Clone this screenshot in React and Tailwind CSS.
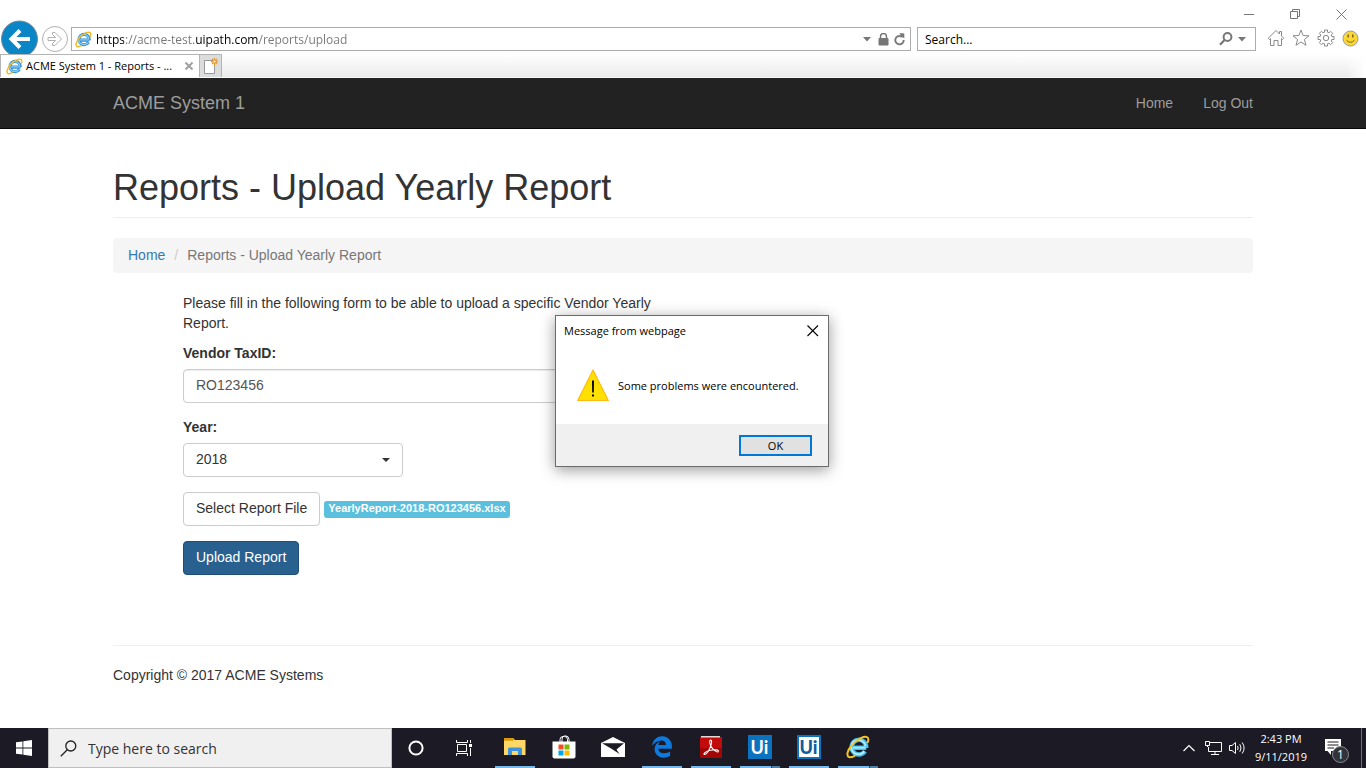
import { useState } from "react";
import { FaEdgeLegacy } from "react-icons/fa6";

const UI_FONT = "font-['Open_Sans','Noto_Sans',sans-serif]";

function InternetExplorerIcon({ className, body = "#3ba9e8", core = "#7fd0f7", ring = "#f2b91d" }) {
  return (
    <svg viewBox="0 0 24 24" className={className} aria-hidden="true" fill="none">
      <path d="M20.3 12.8H6.6M19 16.2A7.3 7.3 0 1 1 20.2 12.8" stroke={body} strokeWidth="4.4" />
      <path d="M19.4 12.6H7M18.2 16.4A7.2 7.2 0 1 1 19.6 11.4" stroke={core} strokeWidth="1.8" />
      <path
        d="M21.8 7.2C23.6 2.2 20.6 0.4 15.2 2.8C8.6 6 2.6 12.6 1.5 18C0.8 22.2 4 23.4 8.6 20.8"
        stroke={ring}
        strokeWidth="2"
        strokeLinecap="round"
      />
    </svg>
  );
}

function WindowControls() {
  const button = "flex h-7 w-[46px] items-center justify-center";
  return (
    <div className="flex h-[27px] justify-end pr-[2px]">
      <button aria-label="Minimize" className={button}>
        <svg width="10" height="10" stroke="#777"><path d="M0 5.5H10" /></svg>
      </button>
      <button aria-label="Restore" className={button}>
        <svg width="11" height="11" stroke="#777" fill="none"><path d="M.5 2.5h7v7h-7zM2.5 2.5v-2h7v7h-2" /></svg>
      </button>
      <button aria-label="Close window" className={button}>
        <svg width="11" height="11" stroke="#777"><path d="M.5 .5L10.5 10.5M10.5 .5L.5 10.5" /></svg>
      </button>
    </div>
  );
}

function BrowserToolbar() {
  const [url, setUrl] = useState("https://acme-test.uipath.com/reports/upload");
  return (
    <div className="flex h-[54px] overflow-hidden">
      <div className="flex w-[71px] shrink-0 items-start pt-5">
        <button aria-label="Back" className="shrink-0">
          <svg width="39" height="38" viewBox="0 0 39 38">
            <circle cx="19.5" cy="19" r="18" fill="#0a86c6" stroke="#7d8a92" strokeWidth="1" />
            <path d="M30 19H13M20 10.5L11.5 19L20 27.5" stroke="#fff" strokeWidth="4" fill="none" />
          </svg>
        </button>
        <button aria-label="Forward" className="mt-[5px] ml-[2px] shrink-0">
          <svg width="28" height="28" viewBox="0 0 28 28" fill="none" stroke="#b0b0b0">
            <circle cx="14" cy="14" r="12.5" />
            <path d="M7 12.5H14.5L11.5 9.5V7.5H14L20.5 14L14 20.5H11.5V18.5L14.5 15.5H7Z" />
          </svg>
        </button>
      </div>
      <div className="min-w-0 flex-1">
        <WindowControls />
        <div className="flex h-6 items-center">
          <div className="flex h-6 flex-1 items-center border border-[#acacac] bg-white pr-[5px] pl-[3px]">
            <InternetExplorerIcon className="size-[17px] shrink-0" body="#2f8fd8" core="#8fcdf3" />
            <input
              aria-label="Address"
              value={url}
              onChange={(e) => setUrl(e.target.value)}
              className="ml-1 min-w-0 flex-1 bg-[linear-gradient(90deg,#000_0_28px,#767676_28px_99px,#000_99px_163px,#767676_163px)] bg-clip-text pt-[2px] text-xs text-transparent caret-black outline-none"
            />
            <button aria-label="Show address bar history">
              <svg width="8" height="5"><path d="M0 0H8L4 4.5Z" fill="#777" /></svg>
            </button>
            <button aria-label="Security report" className="ml-[7px]">
              <svg width="11" height="13" viewBox="0 0 11 13">
                <path d="M2.5 6V3.5a3 3 0 0 1 6 0V6" fill="none" stroke="#777" strokeWidth="1.5" />
                <rect x="0.5" y="5" width="10" height="7.5" rx="1" fill="#777" />
              </svg>
            </button>
            <button aria-label="Refresh" className="ml-[5px]">
              <svg width="11" height="13" viewBox="0 0 11 13">
                <path d="M7 3.2A4.2 4.2 0 1 0 9.7 7" fill="none" stroke="#777" strokeWidth="1.9" />
                <path d="M5.5 0L10.3 0.6V5.6L8.7 4.2L5.5 4.5L7 2.8Z" fill="#777" />
              </svg>
            </button>
          </div>
          <div className="ml-[6px] flex h-6 w-[339px] items-center border border-[#acacac] bg-white pr-[9px] pl-[7px]">
            <input aria-label="Search" placeholder="Search..." className="min-w-0 flex-1 pt-[2px] text-xs placeholder:text-black outline-none" />
            <button aria-label="Search the web">
              <svg width="14" height="14" viewBox="0 0 14 14" fill="none" stroke="#777">
                <circle cx="8.5" cy="5" r="3.9" strokeWidth="2" />
                <path d="M5.5 8L1 12.8" strokeWidth="2.2" />
              </svg>
            </button>
            <button aria-label="Search options" className="ml-[5px]">
              <svg width="8" height="5"><path d="M0 0H8L4 4.5Z" fill="#777" /></svg>
            </button>
          </div>
          <div className="mr-[7px] ml-[11px] flex items-center gap-[7px] pb-[2px]">
            <button aria-label="Home page">
              <svg width="18" height="18" viewBox="0 0 18 18" fill="none" stroke="#8a8a8a">
                <path d="M9 1.5L1.2 9.3L2.4 10.5L3.5 9.5V16.5H7V11.5H11V16.5H14.5V9.5L15.6 10.5L16.8 9.3L14.5 7V2.5H12.5V5Z" />
              </svg>
            </button>
            <button aria-label="Favorites">
              <svg width="18" height="18" viewBox="0 0 18 18" fill="none" stroke="#8a8a8a">
                <path d="M9 1L11.1 6.5L17 6.8L12.4 10.5L14 16.3L9 13L4 16.3L5.6 10.5L1 6.8L6.9 6.5Z" />
              </svg>
            </button>
            <button aria-label="Tools">
              <svg width="18" height="18" viewBox="0 0 18 18" fill="none" stroke="#8a8a8a">
                <circle cx="9" cy="9" r="2.7" />
                <path d="M7.5 1H10.5V3.2L12 3.8L13.6 2.3L15.7 4.4L14.2 6L14.8 7.5H17V10.5H14.8L14.2 12L15.7 13.6L13.6 15.7L12 14.2L10.5 14.8V17H7.5V14.8L6 14.2L4.4 15.7L2.3 13.6L3.8 12L3.2 10.5H1V7.5H3.2L3.8 6L2.3 4.4L4.4 2.3L6 3.8L7.5 3.2Z" />
              </svg>
            </button>
            <button aria-label="Send feedback">
              <svg width="17" height="17" viewBox="0 0 17 17">
                <circle cx="8.5" cy="8.5" r="7.5" fill="#fdd835" stroke="#999" />
                <path d="M6.2 4.5V7.5M10.8 4.5V7.5" stroke="#7a6420" strokeWidth="1.5" />
                <path d="M4.5 10.2Q8.5 14.4 12.5 10.2" stroke="#7a6420" fill="none" />
              </svg>
            </button>
          </div>
        </div>
      </div>
    </div>
  );
}

function TabStrip() {
  return (
    <div className="flex h-6 border-b border-[#f8f8f8] bg-linear-to-b from-white to-[#ebebeb]">
      <div className="flex w-[200px] items-center border-t border-r border-l border-[#b4b4b4] bg-white pl-[5px]">
        <InternetExplorerIcon className="size-[17px] shrink-0" body="#2f8fd8" core="#8fcdf3" />
        <a href="#tab" className="ml-[3px] text-[11px] whitespace-nowrap text-black">ACME System 1 - Reports - ...</a>
        <button aria-label="Close tab" className="ml-auto pr-[6px]">
          <svg width="8" height="8" stroke="#a0a0a0" strokeWidth="2"><path d="M.5 .5L7.5 7.5M7.5 .5L.5 7.5" /></svg>
        </button>
      </div>
      <button aria-label="New tab" className="flex w-[22px] items-center justify-center border-t border-r border-[#b4b4b4] bg-[#dcdcdc]">
        <svg width="16" height="16" viewBox="0 0 16 16">
          <path d="M1.5 2.5H11.5V15.5H1.5Z" fill="#fff" stroke="#999" />
          <path d="M11.5 0V7M8 3.5H15M9 1L14 6M14 1L9 6" stroke="#ee9a22" strokeWidth="1.3" />
          <circle cx="11.5" cy="3.5" r="1" fill="#fff" />
        </svg>
      </button>
      <div className="ml-auto w-5 bg-linear-to-r from-transparent to-white" />
    </div>
  );
}

function SiteNav() {
  return (
    <nav className="border-b border-[#080808] bg-[#222] text-[#9d9d9d]">
      <div className="mx-auto flex h-[50px] max-w-[1170px] items-center justify-between px-[15px]">
        <a href="#top" className="text-lg leading-5">ACME System 1</a>
        <div className="flex gap-[30px] text-sm leading-5">
          <a href="#home">Home</a>
          <a href="#logout">Log Out</a>
        </div>
      </div>
    </nav>
  );
}

function UploadForm() {
  const [taxId, setTaxId] = useState("RO123456");
  return (
    <form className="ml-[70px] w-[480px]" onSubmit={(e) => e.preventDefault()}>
      <p className="mb-[10px]">
        Please fill in the following form to be able to upload a specific Vendor Yearly Report.
      </p>
      <label htmlFor="tax-id" className="mb-[6px] block font-bold">Vendor TaxID:</label>
      <input
        id="tax-id"
        value={taxId}
        onChange={(e) => setTaxId(e.target.value)}
        className="mb-[14px] block h-[34px] w-full rounded border border-[#ccc] px-3 pb-[2px] text-[#555] shadow-[inset_0_1px_1px_rgba(0,0,0,0.075)] outline-none"
      />
      <label htmlFor="year" className="mb-[6px] block font-bold">Year:</label>
      <div className="relative mb-[15px] w-[220px]">
        <select id="year" defaultValue="2018" className="block h-[34px] w-full appearance-none rounded border border-[#ccc] bg-white px-3 pb-[2px] text-[#333] outline-none">
          <option>2017</option>
          <option>2018</option>
          <option>2019</option>
        </select>
        <svg width="8" height="4" className="pointer-events-none absolute top-[15px] right-[13px]"><path d="M0 0H8L4 4Z" fill="#333" /></svg>
      </div>
      <div className="mb-[15px] flex items-center gap-1">
        <button type="button" className="h-[34px] rounded border border-[#ccc] bg-white px-3 pb-[2px] text-[#333]">Select Report File</button>
        <span className="rounded-[3px] bg-[#5bc0de] px-1 pb-[3px] text-[11px] leading-[14px] font-bold text-white">YearlyReport-2018-RO123456.xlsx</span>
      </div>
      <button className="h-[34px] rounded border border-[#204d74] bg-[#286090] px-3 pb-[2px] text-white">Upload Report</button>
    </form>
  );
}

function Page() {
  return (
    <div className="mx-auto w-full max-w-[1170px] flex-1 px-[15px] pt-[39px] text-sm leading-5 text-[#333]">
      <h1 className="border-b border-[#eee] pb-[9px] text-4xl leading-10 font-normal">Reports - Upload Yearly Report</h1>
      <ol className="my-5 flex rounded bg-[#f5f5f5] px-[15px] pt-[7px] pb-2 text-[#777]">
        <li><a href="#home" className="text-[#337ab7]">Home</a></li>
        <li><span className="px-[9px] text-[#ccc]">/</span>Reports - Upload Yearly Report</li>
      </ol>
      <UploadForm />
      <footer className="mt-[70px] border-t border-[#eee] pt-[19px]">
        <p>Copyright © 2017 ACME Systems</p>
      </footer>
    </div>
  );
}

function MessageDialog({ onClose }) {
  return (
    <div
      role="alertdialog"
      aria-labelledby="dialog-title"
      aria-describedby="dialog-text"
      className={`absolute top-[315px] left-[555px] w-[274px] border border-[#6b6b6b] bg-white text-black shadow-[0_3px_14px_rgba(0,0,0,0.4)] ${UI_FONT}`}
    >
      <div className="flex h-[30px] items-center justify-between pr-[9px] pl-2">
        <h2 id="dialog-title" className="text-[11px]">Message from webpage</h2>
        <button aria-label="Close" onClick={onClose}>
          <svg width="12" height="12" stroke="#000" strokeWidth="1.1"><path d="M.5 .5L11 11M11 .5L.5 11" /></svg>
        </button>
      </div>
      <div className="flex h-[78px] items-center gap-[9px] pl-[21px]">
        <svg width="32" height="32" viewBox="0 0 32 32">
          <path d="M16 1L31.3 31.5H0.7Z" fill="#ffe000" stroke="#ffb914" strokeWidth="1.2" strokeLinejoin="round" />
          <path d="M15 11.5H17L16.8 23.5H15.2ZM15 25.5H17V27.5H15Z" fill="#000" />
        </svg>
        <p id="dialog-text" className="pt-[2px] text-[11px]">Some problems were encountered.</p>
      </div>
      <div className="flex h-[42px] items-center justify-end bg-[#f0f0f0] pr-4">
        <button onClick={onClose} className="h-[21px] w-[73px] border-2 border-[#0078d7] bg-[#e1e1e1] pt-px text-[11px] leading-4">OK</button>
      </div>
    </div>
  );
}

function TaskbarApp({ label, running, grouped, children }) {
  return (
    <button aria-label={label} className="flex h-10 w-[49px] flex-col items-center">
      <span className="flex h-[38px] items-center">{children}</span>
      {running && (
        <span className="flex h-[2px] w-10 bg-[#76b9ed]">
          {grouped && <span className="ml-auto w-[9px] border-l border-[#2c4358] bg-[#4f7fa6]" />}
        </span>
      )}
    </button>
  );
}

function Taskbar() {
  return (
    <div className="flex h-10 bg-[#1b1a25] text-white">
      <button aria-label="Start" className="flex w-12 items-center justify-center">
        <svg width="16" height="16" viewBox="0 0 16 16" fill="#fff">
          <path d="M0 2.3L6.5 1.4V7.6H0ZM7.3 1.2L16 0V7.6H7.3ZM0 8.4H6.5V14.6L0 13.7ZM7.3 8.4H16V16L7.3 14.8Z" />
        </svg>
      </button>
      <label className="flex w-[344px] items-center border border-[#bfbfbf] bg-[#f0f0f0] pl-[11px]">
        <svg width="17" height="17" viewBox="0 0 17 17" fill="none" stroke="#222" strokeWidth="1.3" aria-hidden="true">
          <circle cx="10.8" cy="6" r="5" />
          <path d="M7.3 9.7L0.8 16.2" />
        </svg>
        <input aria-label="Type here to search" placeholder="Type here to search" className="ml-[11px] min-w-0 flex-1 pt-[2px] text-sm text-[#333] placeholder:text-[#333] outline-none" />
      </label>
      <button aria-label="Cortana" className="flex w-12 items-center justify-center">
        <svg width="16" height="16"><circle cx="8" cy="8" r="6.6" fill="none" stroke="#fff" strokeWidth="2" /></svg>
      </button>
      <button aria-label="Task View" className="mr-[2px] flex w-12 items-center justify-center">
        <svg width="17" height="16" viewBox="0 0 17 16" fill="none" stroke="#fff">
          <path d="M1.5 4.5H10.5V11.5H1.5ZM.5 0V2.5H11.5V0M.5 16V13.5H11.5V16M14.5 0V3M14.5 8V16" />
          <path d="M13 4H16V7H13Z" fill="#fff" stroke="none" />
        </svg>
      </button>
      <TaskbarApp label="File Explorer" running>
        <svg width="22" height="18" viewBox="0 0 22 18">
          <path d="M0 0H9L11 2H21.5V17H0Z" fill="#ffd766" />
          <path d="M0 0H9L10.3 1.3L9 2.8H0Z" fill="#d99a0b" />
          <path d="M4 17V11Q4 9.5 5.5 9.5H16.5Q18 9.5 18 11V17H14V13H8V17Z" fill="#3d94dc" />
        </svg>
      </TaskbarApp>
      <TaskbarApp label="Microsoft Store">
        <svg width="24" height="24" viewBox="0 0 24 24">
          <path d="M8 7V4.5Q8 1.5 11 1.5H12.5Q15.5 1.5 15.5 4.5V7M10 7V4.5Q10 .8 13 .8Q17 .8 17 4.5V7" fill="none" stroke="#fff" />
          <path d="M.5 6.5H23.5V21.5Q23.5 23.5 21.5 23.5H2.5Q.5 23.5 .5 21.5Z" fill="#fff" />
          <path d="M6.5 9.5H11.5V14.5H6.5Z" fill="#f25022" />
          <path d="M12.5 9.5H17.5V14.5H12.5Z" fill="#7fba00" />
          <path d="M6.5 15.5H11.5V20.5H6.5Z" fill="#00a4ef" />
          <path d="M12.5 15.5H17.5V20.5H12.5Z" fill="#ffb900" />
        </svg>
      </TaskbarApp>
      <TaskbarApp label="Mail">
        <svg width="24" height="20" viewBox="0 0 24 20">
          <path d="M0 6L12 0L24 6V20H0Z" fill="#fff" />
          <path d="M1 6.2H23L15.5 12.5L18.5 17L10.5 11.8Z" fill="#1b1a25" />
        </svg>
      </TaskbarApp>
      <TaskbarApp label="Microsoft Edge" running>
        <FaEdgeLegacy size={22} color="#0d7ade" />
      </TaskbarApp>
      <TaskbarApp label="Adobe Reader" running>
        <svg width="22" height="22" viewBox="0 0 22 22">
          <path d="M0 1H22V22H0Z" fill="#c20c0c" />
          <path d="M0 12H22V22H0Z" fill="#a30606" />
          <path d="M1 0H20V1.5H1Z" fill="#e8d8d8" />
          <path d="M10 4.5C12 3 12 6.5 10.8 10C9.5 13.5 6.8 18 4.6 18.5C2.6 18.3 5.5 15.2 10.5 14.3C15 13.3 19.2 13.8 18.3 15.6C17 17 12.6 13.5 11 10.3C10 8 9 5.8 10 4.5Z" fill="none" stroke="#fff" strokeWidth="1.1" />
        </svg>
      </TaskbarApp>
      <TaskbarApp label="UiPath Studio" running grouped>
        <span className="flex size-6 items-center justify-center bg-[#0b72c0] font-['Lato',sans-serif] text-lg leading-6 font-bold">Ui</span>
      </TaskbarApp>
      <TaskbarApp label="UiPath Robot" running>
        <span className="flex size-6 items-center justify-center border-2 border-[#0b72c0] bg-white font-['Lato',sans-serif] text-lg leading-5 font-black text-[#0b5f9e]">Ui</span>
      </TaskbarApp>
      <TaskbarApp label="Internet Explorer" running grouped>
        <InternetExplorerIcon className="size-6" body="#45c1f0" core="#b5ecfd" ring="#f6c321" />
      </TaskbarApp>
      <div className="ml-auto flex items-center">
        <button aria-label="Show hidden icons" className="flex w-6 justify-center">
          <svg width="12" height="8" fill="none" stroke="#fff" strokeWidth="1.2"><path d="M.5 7L6 1.5L11.5 7" /></svg>
        </button>
        <button aria-label="Network" className="flex w-6 justify-center">
          <svg width="17" height="14" viewBox="0 0 17 14" fill="none" stroke="#fff">
            <path d="M5 1.5H16.5V10.5H3.5V6M.5 .5H4.5V4.5H.5ZM2.5 4.5V6M10 10.5V13M6 13.5H14" />
          </svg>
        </button>
        <button aria-label="Volume" className="flex w-6 justify-center">
          <svg width="17" height="14" viewBox="0 0 17 14" fill="none" stroke="#fff">
            <path d="M.5 4.5H3L6.5 1.5V12.5L3 9.5H.5ZM8.5 5Q9.8 7 8.5 9M10.8 3.2Q13.3 7 10.8 10.8M13.2 1.5Q17 7 13.2 12.5" />
          </svg>
        </button>
        <button className="w-16 text-center text-[11px] leading-[18px]">
          <span className="block">2:43 PM</span>
          <span className="block">9/11/2019</span>
        </button>
        <button aria-label="Notifications" className="mr-[11px] ml-[11px] pt-[3px]">
          <svg width="26" height="26" viewBox="0 0 26 26">
            <path d="M1 2H17V14H7V18L3.5 14H1Z" fill="#fff" />
            <path d="M3.5 5H14.5M3.5 8H14.5M3.5 11H10" stroke="#1b1a25" />
            <circle cx="16.5" cy="17.5" r="8" fill="#333239" stroke="#8a8a8f" />
            <text x="16.5" y="21.5" textAnchor="middle" fontSize="12" fill="#fff">1</text>
          </svg>
        </button>
        <div className="h-10 w-[5px] border-l border-[#6f6f78]" />
      </div>
    </div>
  );
}

export default function App() {
  const [dialogOpen, setDialogOpen] = useState(true);
  return (
    <div className="relative flex min-h-screen flex-col bg-white font-['Liberation_Sans',Arial,sans-serif]">
      <header className={UI_FONT}>
        <BrowserToolbar />
        <TabStrip />
      </header>
      <SiteNav />
      <Page />
      <div className={UI_FONT}>
        <Taskbar />
      </div>
      {dialogOpen && <MessageDialog onClose={() => setDialogOpen(false)} />}
    </div>
  );
}
